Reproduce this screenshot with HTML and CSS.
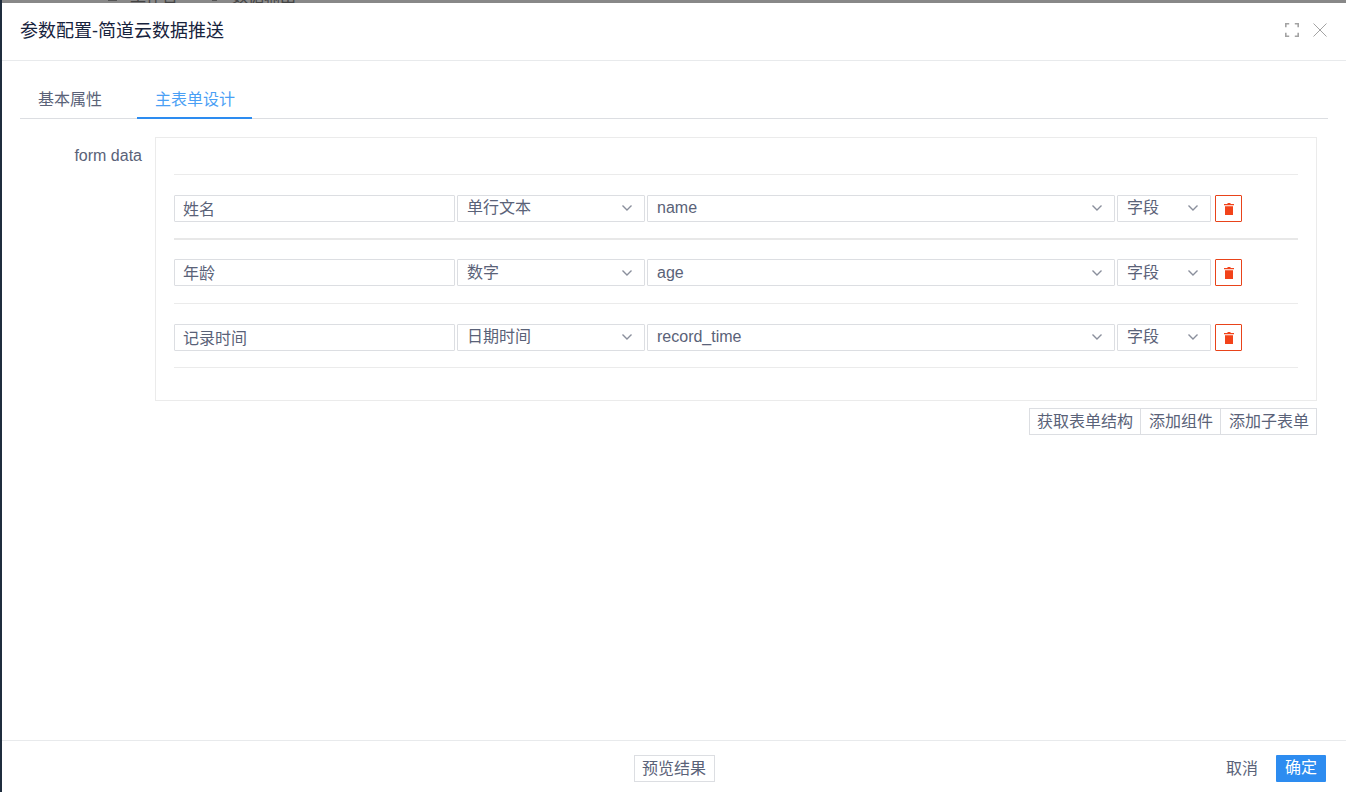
FILE: index.html
```html
<!DOCTYPE html>
<html lang="zh">
<head>
<meta charset="utf-8">
<title>参数配置</title>
<link rel="stylesheet" href="styles.css">
</head>
<body>
<div class="backdrop"><i class="mark"></i><span class="crumb">工作台</span><i class="mark mark-2"></i><span class="crumb crumb-2">数据输出</span></div>
<div class="dialog">
  <header class="head">
    <div class="title">参数配置-简道云数据推送</div>
    <div class="head-tools">
      <svg class="ico" width="14" height="14" viewBox="0 0 14 14" fill="none" stroke="#a3a3a3" stroke-width="1.6"><path d="M.8 4.2V.8h3.4M9.8.8h3.4v3.4M13.2 9.8v3.4H9.8M4.2 13.2H.8V9.8"/></svg>
      <svg class="ico" width="14" height="14" viewBox="0 0 14 14" fill="none" stroke="#a3a3a3" stroke-width="1"><path d="M.5.5l13 13M13.5.5l-13 13"/></svg>
    </div>
  </header>
  <main class="body">
    <nav class="tabs">
      <div class="tab">基本属性</div>
      <div class="tab active">主表单设计</div>
    </nav>
    <div class="form-line">
      <div class="label">form data</div>
      <div class="content">
        <div class="box">
          <div class="row first">
            <div class="field input">姓名</div>
            <div class="field sel"><span>单行文本</span><svg class="arrow" width="10" height="6" viewBox="0 0 10 6" fill="none" stroke="#8a8f9c" stroke-width="1.4"><path d="M.5.5L5 5 9.500.5"/></svg></div>
            <div class="field sel"><span>name</span><svg class="arrow" width="10" height="6" viewBox="0 0 10 6" fill="none" stroke="#8a8f9c" stroke-width="1.4"><path d="M.5.5L5 5 9.500.5"/></svg></div>
            <div class="field sel"><span>字段</span><svg class="arrow" width="10" height="6" viewBox="0 0 10 6" fill="none" stroke="#8a8f9c" stroke-width="1.4"><path d="M.5.5L5 5 9.500.5"/></svg></div>
            <div class="del"><svg width="10" height="12" viewBox="0 0 10 12" fill="#f2431a"><path d="M3.500 0h3v1H10v1.200H0V1h3.500zM1 3.200h8V12H1z"/></svg></div>
          </div>
          <div class="row thick">
            <div class="field input">年龄</div>
            <div class="field sel"><span>数字</span><svg class="arrow" width="10" height="6" viewBox="0 0 10 6" fill="none" stroke="#8a8f9c" stroke-width="1.4"><path d="M.5.5L5 5 9.500.5"/></svg></div>
            <div class="field sel"><span>age</span><svg class="arrow" width="10" height="6" viewBox="0 0 10 6" fill="none" stroke="#8a8f9c" stroke-width="1.4"><path d="M.5.5L5 5 9.500.5"/></svg></div>
            <div class="field sel"><span>字段</span><svg class="arrow" width="10" height="6" viewBox="0 0 10 6" fill="none" stroke="#8a8f9c" stroke-width="1.4"><path d="M.5.5L5 5 9.500.5"/></svg></div>
            <div class="del"><svg width="10" height="12" viewBox="0 0 10 12" fill="#f2431a"><path d="M3.500 0h3v1H10v1.200H0V1h3.500zM1 3.200h8V12H1z"/></svg></div>
          </div>
          <div class="row">
            <div class="field input">记录时间</div>
            <div class="field sel"><span>日期时间</span><svg class="arrow" width="10" height="6" viewBox="0 0 10 6" fill="none" stroke="#8a8f9c" stroke-width="1.4"><path d="M.5.5L5 5 9.500.5"/></svg></div>
            <div class="field sel"><span>record_time</span><svg class="arrow" width="10" height="6" viewBox="0 0 10 6" fill="none" stroke="#8a8f9c" stroke-width="1.4"><path d="M.5.5L5 5 9.500.5"/></svg></div>
            <div class="field sel"><span>字段</span><svg class="arrow" width="10" height="6" viewBox="0 0 10 6" fill="none" stroke="#8a8f9c" stroke-width="1.4"><path d="M.5.5L5 5 9.500.5"/></svg></div>
            <div class="del"><svg width="10" height="12" viewBox="0 0 10 12" fill="#f2431a"><path d="M3.500 0h3v1H10v1.200H0V1h3.500zM1 3.200h8V12H1z"/></svg></div>
          </div>
        </div>
        <div class="btn-group">
          <div class="gbtn">获取表单结构</div>
          <div class="gbtn">添加组件</div>
          <div class="gbtn">添加子表单</div>
        </div>
      </div>
    </div>
  </main>
  <footer class="foot">
    <div class="preview">预览结果</div>
    <div class="foot-actions">
      <div class="cancel">取消</div>
      <div class="ok">确定</div>
    </div>
  </footer>
</div>
</body>
</html>
```
FILE: styles.css
```css
* { box-sizing: border-box; }
html, body { margin: 0; padding: 0; height: 792px; overflow: hidden; }
body {
  background: #1f2d3d;
  font-family: "Liberation Sans", "Noto Sans CJK SC", sans-serif;
  font-size: 16px;
  color: #5a6278;
  display: flex;
  flex-direction: column;
}
.backdrop {
  height: 3px;
  flex: none;
  margin-left: 2px;
  background: #888;
  overflow: hidden;
  display: flex;
  color: #444;
  font-size: 16px;
  line-height: 3px;
  padding-left: 106px;
}
.mark { display: block; width: 9px; height: 1px; background: #555; }
.mark-2 { width: 5px; margin-left: 34px; }
.crumb { position: relative; top: -5px; margin-left: 13px; }
.crumb-2 { margin-left: 15px; }
.dialog {
  flex: 1;
  margin-left: 2px;
  background: #fff;
  display: flex;
  flex-direction: column;
  min-height: 0;
}
.head {
  height: 58px;
  flex: none;
  border-bottom: 1px solid #e8eaec;
  display: flex;
  align-items: center;
  justify-content: space-between;
  padding: 0 19px 3px 18px;
}
.title { font-size: 18px; color: #17233d; margin-bottom: 2px; }
.head-tools { display: flex; gap: 14px; align-items: center; }
.ico { display: block; }
.body { flex: 1; padding: 0 18px; min-height: 0; }
.tabs {
  height: 58px;
  border-bottom: 1px solid #dcdee2;
  display: flex;
  align-items: flex-end;
}
.tab {
  height: 38px;
  line-height: 37px;
  padding: 0 18px;
  margin-bottom: -1px;
}
.tab.active {
  margin-left: 17px;
  padding-right: 17px;
  color: #4a9ff5;
  border-bottom: 2px solid #2d8cf0;
}
.form-line { display: flex; margin-top: 18px; }
.label {
  width: 122px;
  flex: none;
  text-align: right;
  line-height: 38px;
}
.content { margin-left: 13px; width: 1162px; }
.box {
  border: 1px solid #ebebeb;
  height: 264px;
  padding: 36px 18px 0;
}
.row {
  display: grid;
  grid-template-columns: 281px 188px 468px 94px 29px;
  column-gap: 2px;
  border-top: 1px solid #ebebeb;
  padding-top: 20px;
  height: 64px;
}
.row.thick { height: 65px; border-top: 2px solid #e8e8e8; padding-top: 19px; }
.row:last-child { height: 65px; border-bottom: 1px solid #ebebeb; }
.field {
  height: 27px;
  border: 1px solid #dcdee2;
  border-radius: 1px;
  display: flex;
  align-items: center;
  justify-content: space-between;
  line-height: 25px;
}
.field.input { padding: 2px 8px 0; }
.field.sel { padding: 0 12px 2px 9px; }
.row.thick .field.sel { padding-bottom: 1px; }
.arrow { display: block; margin-top: 1px; }
.del {
  height: 27px;
  margin-left: 2px;
  border: 1px solid #e8431a;
  display: flex;
  align-items: center;
  justify-content: center;
  border-radius: 1px;
}
.btn-group { display: flex; justify-content: flex-end; margin-top: 7px; }
.gbtn {
  height: 27px;
  line-height: 25px;
  padding: 0 7px 0 8px;
  border: 1px solid #dcdee2;
  border-left-width: 0;
}
.gbtn:first-child { border-left-width: 1px; padding-left: 7px; }
.foot {
  height: 52px;
  flex: none;
  border-top: 1px solid #e8eaec;
  display: flex;
  align-items: flex-start;
  padding-top: 14px;
  justify-content: space-between;
  padding-left: 632px;
  padding-right: 20px;
}
.preview {
  height: 27px;
  line-height: 25px;
  padding: 0 8px 0 7px;
  border: 1px solid #dcdee2;
}
.foot-actions { display: flex; align-items: center; }
.cancel { line-height: 27px; margin-right: 18px; }
.ok {
  width: 50px;
  height: 27px;
  line-height: 26px;
  text-align: center;
  background: #2d8cf0;
  color: #fff;
  border-radius: 1px;
}
```
